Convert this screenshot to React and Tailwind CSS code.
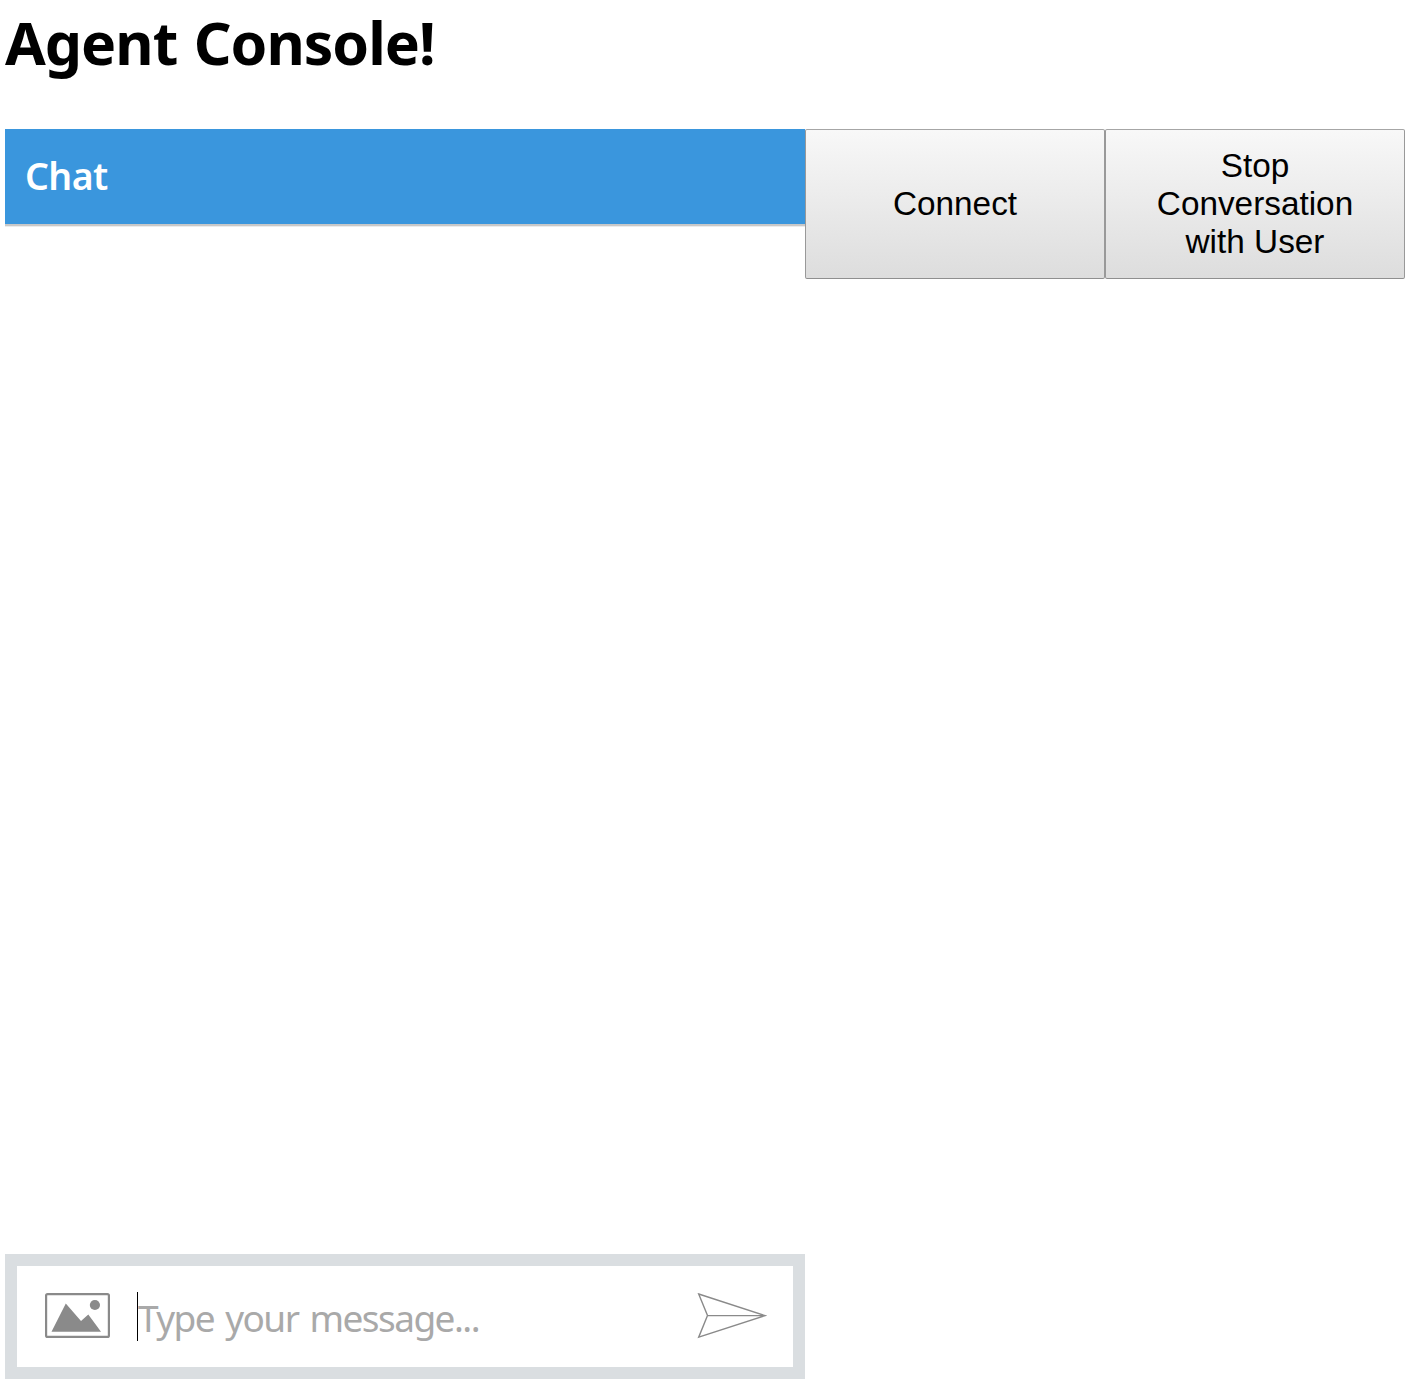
function ImageIcon() {
  return (
    <svg className="mb-px block h-[46px] w-[66px]" viewBox="0 0 66 46" fill="#8a8a8a">
      <rect x="1.1" y="1.1" width="62.8" height="42.8" rx="1.5" fill="none" stroke="#8a8a8a" strokeWidth="2.2" />
      <path d="M6.5 38.8 L20.8 10.6 L36 28 L43.3 21.5 L56 38.8 Z" />
      <circle cx="49.9" cy="12" r="5.1" />
    </svg>
  );
}

function SendIcon() {
  return (
    <svg className="mb-px block h-[46px] w-[70px]" viewBox="0 0 70 46" fill="none" stroke="#8a8a8a" strokeWidth="1.4">
      <path d="M1.7 1 L68 22.6 L1.7 44.2 L10.5 22.6 Z M10.5 22.6 H68" />
    </svg>
  );
}

function ConsoleButton({ children }) {
  return (
    <button className="h-[150px] w-[300px] rounded-[2px] border border-t-[#a6a6a6] border-x-[#999999] border-b-[#8f8f8f] bg-linear-to-b from-[#f8f8f8] to-[#dddddd] px-10 text-center font-['Liberation_Sans',Arial,sans-serif] text-[33.33px] leading-[38px] text-black">
      {children}
    </button>
  );
}

export default function App() {
  return (
    <div className="h-[1395px] bg-white pl-[5px] font-['Noto_Sans','Open_Sans',sans-serif]">
      <h1 className="h-[129px] pt-0.5 text-[59px] leading-20 font-bold tracking-[-1px] [word-spacing:2px] text-black">
        Agent Console!
      </h1>
      <div className="flex items-start">
        <section className="flex h-[1250px] w-[800px] flex-col">
          <header className="h-[95px] bg-[#3a96dd] pl-5 text-[37.5px] leading-[93px] font-semibold tracking-[-0.6px] text-white shadow-[0_2px_0_#c8c8c8,0_3px_0_#ececec]">
            Chat
          </header>
          <div className="flex-1" />
          <footer className="flex h-[125px] items-center border-[12px] border-[#dadee1] pr-[26px] pl-7">
            <ImageIcon />
            <div className="ml-[26px] flex flex-1 items-center">
              <span className="h-[49px] w-px bg-black" />
              <span className="pt-0.5 text-[37px] leading-[50px] tracking-[-1.55px] [word-spacing:3px] whitespace-nowrap text-[#a9a9a9]">
                Type your message...
              </span>
            </div>
            <SendIcon />
          </footer>
        </section>
        <ConsoleButton>Connect</ConsoleButton>
        <ConsoleButton>Stop Conversation with User</ConsoleButton>
      </div>
    </div>
  );
}
